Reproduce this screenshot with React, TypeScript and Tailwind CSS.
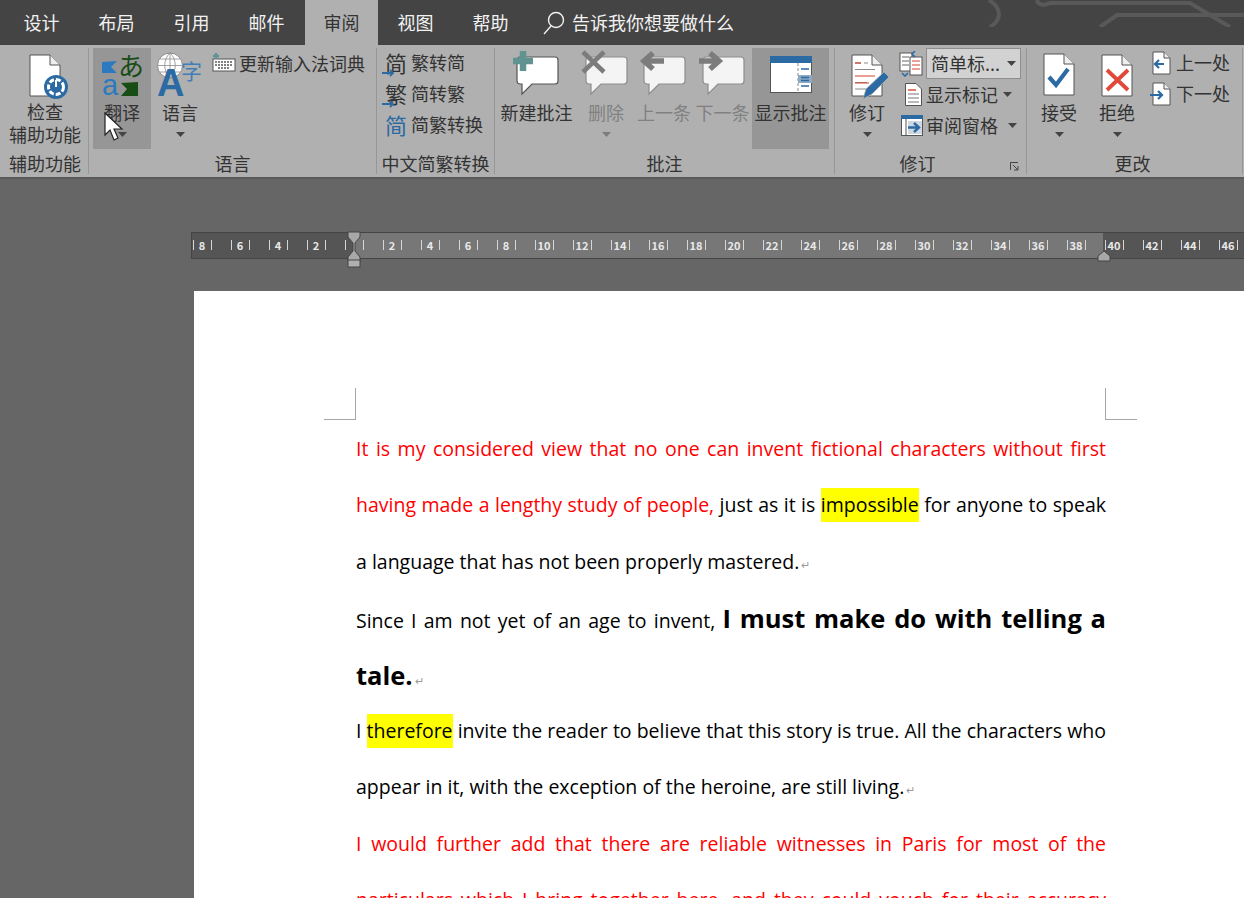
import React from 'react';

const cjk = '"Noto Sans CJK SC", "Noto Sans", sans-serif';

const Caret = ({ color = '#444' }: { color?: string }) => (
  <svg width="9" height="5" viewBox="0 0 9 5" className="shrink-0"><path d="M0 0h9L4.5 5z" fill={color} /></svg>
);

const Doc = ({ w = 30, h = 41, fold = 10, className = '', children }: { w?: number; h?: number; fold?: number; className?: string; children?: React.ReactNode }) => (
  <svg width={w + 2} height={h + 2} viewBox={`0 0 ${w + 2} ${h + 2}`} className={`overflow-visible ${className}`}>
    <path d={`M1 1H${w + 1 - fold}L${w + 1} ${fold + 1}V${h + 1}H1z`} fill="#fff" stroke="#555" />
    <path d={`M${w + 1 - fold} 1V${fold + 1}H${w + 1}`} fill="#eee" stroke="#555" />
    {children}
  </svg>
);

// comment bubble, origin is 3px above the group's icon row
const Bubble = ({ dim, children }: { dim?: boolean; children?: React.ReactNode }) => (
  <svg width="48" height="46" viewBox="0 0 48 46" className="mt-[2px] overflow-visible">
    <path d="M7 7H42a3 3 0 0 1 3 3V31a3 3 0 0 1-3 3H19L9 44V34H7a3 3 0 0 1-3-3V10a3 3 0 0 1 3-3z" fill={dim ? '#f4f4f4' : '#fff'} stroke={dim ? '#8d8d8d' : '#555'} strokeWidth="1.2" />
    {children}
  </svg>
);

const LargeButton = ({ icon, label, w, dim, caret, active }: { icon: React.ReactNode; label: React.ReactNode; w: number; dim?: boolean; caret?: boolean; active?: boolean }) => (
  <div className={`flex h-[101px] shrink-0 flex-col items-center ${active ? 'bg-[#969696]' : ''}`} style={{ width: w }}>
    <div className="flex h-[52px] items-start justify-center">{icon}</div>
    <div className={`text-center text-[18px] leading-[24px] whitespace-nowrap ${dim ? 'text-[#818181]' : 'text-[#333]'}`}>{label}</div>
    {caret && <div className="mt-[8px] flex"><Caret color={dim ? '#7c7c7c' : '#444'} /></div>}
  </div>
);

const Group = ({ label, w, children, extra, labelPad = 0 }: { label: string; w: number; children: React.ReactNode; extra?: React.ReactNode; labelPad?: number }) => (
  <div className="relative flex h-[126px] shrink-0 flex-col border-r border-[#979797]" style={{ width: w }}>
    <div className="flex flex-1">{children}</div>
    <div className="text-center text-[18px] leading-[22px] text-[#333] whitespace-nowrap" style={{ paddingRight: labelPad }}>{label}</div>
    {extra}
  </div>
);

const SmallRow = ({ icon, label, caretClass }: { icon: React.ReactNode; label: string; caretClass?: string }) => (
  <div className="flex h-[31px] items-center gap-[3px] text-[18px] text-[#333] whitespace-nowrap">
    <div className="flex w-[24px] shrink-0 justify-center">{icon}</div>
    <span>{label}</span>
    {caretClass && <span className={caretClass}><Caret /></span>}
  </div>
);

const HanIcon = ({ top, arrow, blue }: { top: string; arrow?: boolean; blue?: boolean }) => (
  <div className={`relative h-[28px] w-[24px] text-center text-[22px] leading-[26px] ${blue ? 'text-[#2b6aa3]' : 'text-[#333]'}`}>
    {top}
    {arrow && (
      <svg width="13" height="8" viewBox="0 0 13 8" className="absolute bottom-0 left-[-2px]">
        <path d="M0 4h11M8 1l3 3-3 3" fill="none" stroke="#2b6aa3" strokeWidth="1.8" />
      </svg>
    )}
  </div>
);

const leftNums = ['8', '6', '4', '2'];
const rightNums = Array.from({ length: 23 }, (_, i) => String((i + 1) * 2));

const RulerCell = ({ n }: { n: string }) => (
  <div className="flex w-[38px] shrink-0 justify-center">
    <div className="my-[7px] flex h-[10px] w-[19px] items-center justify-center border-x border-[#d6d6d6] text-[11px] font-bold leading-none text-[#e8e8e8]">{n}</div>
  </div>
);

const lineCls = 'h-[56.4px] leading-[56.4px] whitespace-nowrap';
const just = `${lineCls} [text-align:justify] [text-align-last:justify]`;
const Mark = () => <span className="ml-[2px] text-[11px] text-[#9a9a9a]">↵</span>;
const Hl = ({ children }: { children: React.ReactNode }) => (
  <span className="inline-block h-[34px] bg-[#ffff00] align-baseline leading-[34px]">{children}</span>
);

export default function App() {
  return (
    <div className="relative flex h-[898px] w-[1244px] flex-col overflow-hidden bg-[#666666]" style={{ fontFamily: cjk }}>
      {/* tabs */}
      <div className="relative flex h-[45px] shrink-0 items-center overflow-hidden bg-[#444444] pl-[4px] text-[18px] text-[#f2f2f2]">
        {['设计', '布局', '引用', '邮件'].map((t) => (
          <div key={t} className="w-[75px] text-center">{t}</div>
        ))}
        <div className="ml-[1px] flex h-full w-[73px] items-center justify-center bg-[#b0b0b0] text-[#333]">审阅</div>
        <div className="w-[75px] text-center">视图</div>
        <div className="w-[75px] text-center">帮助</div>
        <div className="ml-[15px] flex items-center gap-[7px]">
          <svg width="22" height="24" viewBox="0 0 22 24"><circle cx="13" cy="9" r="7.5" fill="none" stroke="#f2f2f2" strokeWidth="1.4" /><path d="M8 15L1 23" stroke="#f2f2f2" strokeWidth="1.4" /></svg>
          <span>告诉我你想要做什么</span>
        </div>
        <svg width="304" height="27" viewBox="0 0 304 27" className="absolute right-0 top-0">
          <g fill="none" stroke="#595959" strokeWidth="4">
            <path d="M49 0C62 8 62 20 50 27" />
            <path d="M97 0C98 5 104 6 110 3H250L290 27" />
            <path d="M160 27L177 15H304" />
          </g>
        </svg>
      </div>

      {/* ribbon */}
      <div className="flex h-[134px] shrink-0 border-b-2 border-[#5a5a5a] bg-[#b0b0b0] pl-[2px] pt-[3px]">
        <Group label="辅助功能" w={87}>
          <div className="flex w-full flex-col items-center">
            <div className="mt-[6px] h-[46px]">
              <Doc>
                <circle cx="27" cy="33" r="12" fill="#2b6aa3" />
                <circle cx="27" cy="33" r="7.5" fill="none" stroke="#fff" strokeWidth="3" strokeDasharray="5 2" />
                <path d="M27 26v7" stroke="#fff" strokeWidth="2" />
              </Doc>
            </div>
            <div className="text-center text-[18px] leading-[23px] text-[#333]">检查<br />辅助功能</div>
          </div>
        </Group>
        <Group label="语言" w={288}>
          <div className="ml-[4px]">
            <LargeButton
              w={58}
              active
              caret
              label="翻译"
              icon={
                <svg width="40" height="42" viewBox="0 0 40 42" className="mt-[6px] overflow-visible">
                  <path d="M0 8L15 7 9 13 15 19H0z" fill="#2b7ac0" />
                  <text x="16" y="22" fontSize="26" fill="#184d16" style={{ fontFamily: cjk }}>あ</text>
                  <text x="0" y="41" fontSize="29" fill="#2b7ac0" style={{ fontFamily: '"Liberation Sans", sans-serif' }}>a</text>
                  <path d="M36 28V42H19L25 35 19 29z" fill="#184d16" />
                </svg>
              }
            />
          </div>
          <LargeButton
            w={58}
            caret
            label="语言"
            icon={
              <svg width="46" height="44" viewBox="0 0 46 44" className="mt-[5px] overflow-visible">
                <circle cx="13" cy="12.5" r="12.5" fill="#fff" stroke="#8a8a8a" strokeWidth="1" />
                <path d="M13 0v25M1 12.5h24M3 6h20M3 19h20M13 0c-7 6-7 19 0 25M13 0c7 6 7 19 0 25" fill="none" stroke="#8a8a8a" strokeWidth="0.8" />
                <text x="0" y="43" fontSize="38" fontWeight="700" fill="#2b6aa3" style={{ fontFamily: '"Liberation Sans", sans-serif' }}>A</text>
                <text x="24" y="26" fontSize="21" fill="#3f7fb5" style={{ fontFamily: cjk }}>字</text>
              </svg>
            }
          />
          <div className="ml-[3px] flex h-[30px] items-center gap-[3px] text-[18px] text-[#333] whitespace-nowrap">
            <svg width="24" height="20" viewBox="0 0 24 20">
              <rect x="1" y="6" width="22" height="12" fill="#fff" stroke="#555" />
              <path d="M3 9h18M3 12h18M6 15h12" stroke="#555" strokeWidth="1.4" strokeDasharray="2 1" />
              <path d="M4 0v6M1 3h6" stroke="#5f9490" strokeWidth="2.4" />
            </svg>
            <span>更新输入法词典</span>
          </div>
        </Group>
        <Group label="中文简繁转换" w={118}>
          <div className="-mt-[1px] flex flex-col pl-[7px]">
            <SmallRow icon={<HanIcon top="简" arrow />} label="繁转简" />
            <SmallRow icon={<HanIcon top="繁" arrow />} label="简转繁" />
            <SmallRow icon={<HanIcon top="简" blue />} label="简繁转换" />
          </div>
        </Group>
        <Group label="批注" w={340}>
          <div className="flex pl-[1px]">
            <LargeButton w={81} label="新建批注" icon={<Bubble><path d="M10 1V21M0 11H20" stroke="#5f9490" strokeWidth="6.5" /></Bubble>} />
            <LargeButton w={58} dim caret label="删除" icon={<Bubble dim><path d="M1 2L22 22M22 2L1 22" stroke="#7c7c7c" strokeWidth="4.5" /></Bubble>} />
            <LargeButton w={58} dim label="上一条" icon={<Bubble dim><path d="M24 11H6M13 3L4 11l9 8" fill="none" stroke="#7c7c7c" strokeWidth="5.5" /></Bubble>} />
            <LargeButton w={59} dim label="下一条" icon={<Bubble dim><path d="M0 11H18M11 3l9 8-9 8" fill="none" stroke="#7c7c7c" strokeWidth="5.5" /></Bubble>} />
            <LargeButton
              w={77}
              active
              label="显示批注"
              icon={
                <svg width="42" height="37" viewBox="0 0 42 37" className="mt-[8px]">
                  <rect x="0.5" y="0.5" width="41" height="36" fill="#fff" stroke="#555" />
                  <rect x="0" y="0" width="42" height="7" fill="#2b6aa3" />
                  <path d="M28 7V37" stroke="#888" strokeDasharray="3 2" />
                  <rect x="28" y="19" width="14" height="8" fill="#8fa9c4" />
                  <path d="M31 13h8M31 21.5h8M31 24.5h8M31 30h8" stroke="#2b6aa3" strokeWidth="1.3" />
                </svg>
              }
            />
          </div>
        </Group>
        <Group
          label="修订"
          w={192}
          labelPad={26}
          extra={
            <svg width="9" height="9" viewBox="0 0 9 9" className="absolute bottom-[3px] right-[7px]">
              <path d="M.5 8V.5H8M3 3l5 5M8 4v4H4" fill="none" stroke="#444" />
            </svg>
          }
        >
          <div className="flex">
            <LargeButton
              w={64}
              caret
              label="修订"
              icon={
                <Doc className="mt-[6px]">
                  <path d="M4 9h6M13 9h4M4 15.5h20M4 28.5h12M4 35h18" stroke="#8a8a8a" strokeWidth="1.2" />
                  <path d="M4 22h20M4 29h14" stroke="#d4452f" strokeWidth="1.2" />
                  <path d="M4 9h6" stroke="#d4452f" strokeWidth="1.2" />
                  <path d="M12 45L15 35 33 18 38 23 21 40z" fill="#2b6aa3" stroke="#b0b0b0" strokeWidth="0.8" />
                </Doc>
              }
            />
            <div className="flex flex-col">
              <div className="flex h-[31px] items-center">
                <div className="flex w-[27px] justify-start">
                  <svg width="24" height="26" viewBox="0 0 24 26">
                    <rect x="1" y="2" width="12" height="18" fill="#fff" stroke="#555" />
                    <rect x="11" y="6" width="12" height="18" fill="#fff" stroke="#555" />
                    <path d="M13 10h8M13 14h8M13 18h8" stroke="#d4452f" />
                    <path d="M3 6h7M3 10h7M3 14h7" stroke="#666" />
                    <path d="M16 0l-3 3 3 3M3 22l3 3 3-3" fill="none" stroke="#2b6aa3" strokeWidth="1.6" />
                  </svg>
                </div>
                <div className="flex h-[31px] w-[95px] items-center justify-between border border-[#8e8e8e] bg-[#d2d2d2] px-[4px] text-[18px] text-[#333]">
                  <span>简单标...</span>
                  <Caret />
                </div>
              </div>
              <SmallRow
                label="显示标记"
                caretClass="ml-[2px]"
                icon={
                  <svg width="17" height="23" viewBox="0 0 17 23" className="ml-[5px]">
                    <path d="M.5.5H11L16.5 6V22.5H.5z" fill="#fff" stroke="#555" />
                    <path d="M3 7h8" stroke="#d4452f" strokeWidth="1.4" />
                    <path d="M3 11h11M3 15h11M3 19h11" stroke="#777" />
                  </svg>
                }
              />
              <SmallRow
                label="审阅窗格"
                caretClass="ml-[7px]"
                icon={
                  <svg width="22" height="21" viewBox="0 0 22 21" className="ml-[1px]">
                    <rect x="0.5" y="0.5" width="21" height="20" fill="#fff" stroke="#555" />
                    <rect x="0" y="0" width="22" height="4" fill="#2b6aa3" />
                    <path d="M5 4v17" stroke="#555" />
                    <rect x="7" y="6" width="14" height="13" fill="#cfd8e0" />
                    <path d="M7 12.5h10M13 8l5 4.5-5 4.5" fill="none" stroke="#2b6aa3" strokeWidth="2.4" />
                  </svg>
                }
              />
            </div>
          </div>
        </Group>
        <Group label="更改" w={216} labelPad={4}>
          <div className="flex pl-[3px]">
            <LargeButton w={58} caret label="接受" icon={<Doc className="mt-[5px]"><path d="M6 24l7 8L25 16" fill="none" stroke="#2b6aa3" strokeWidth="4.2" /></Doc>} />
            <LargeButton w={58} caret label="拒绝" icon={<Doc className="mt-[6px]"><path d="M6 16l21 20M27 16L6 36" fill="none" stroke="#e0483a" strokeWidth="3.8" /></Doc>} />
            <div className="-mt-[1px] flex flex-col pl-[3px]">
              <SmallRow label="上一处" icon={<Doc w={17} h={22} fold={6}><path d="M12 13H3M7 9l-4 4 4 4" fill="none" stroke="#2b6aa3" strokeWidth="2.2" /></Doc>} />
              <SmallRow label="下一处" icon={<Doc w={17} h={22} fold={6}><path d="M-2 13H9M6 9l4 4-4 4" fill="none" stroke="#2b6aa3" strokeWidth="2.2" /></Doc>} />
            </div>
          </div>
        </Group>
      </div>

      {/* ruler */}
      <div className="relative ml-[191px] mt-[53px] flex h-[27px] shrink-0 border-y border-l border-[#444] bg-[#555555]">
        <div className="absolute left-[162px] top-0 h-full w-[749px] bg-[#777777]" />
        <div className="relative -ml-[9px] flex">
          {leftNums.map((n) => <RulerCell key={n} n={n} />)}
          <RulerCell n="" />
          {rightNums.map((n) => <RulerCell key={n} n={n} />)}
        </div>
        <svg width="14" height="37" viewBox="0 0 14 37" className="absolute -top-[2px] left-[155px]">
          <path d="M1 1H13V6L8 12V20L13 26V31H1V26L6 20V12L1 6z" fill="#a8a8a8" stroke="#444" />
          <rect x="1" y="29" width="12" height="7" fill="#b0b0b0" stroke="#444" />
        </svg>
        <svg width="14" height="12" viewBox="0 0 14 12" className="absolute left-[905px] top-[17px]">
          <path d="M1 11V6L7 1 13 6V11z" fill="#a8a8a8" stroke="#444" />
        </svg>
      </div>

      {/* page */}
      <div className="ml-[194px] mt-[32px] flex-1 bg-white pl-[162px] pr-[138px] pt-[97px] text-[19.5px] text-black" style={{ fontFamily: '"Open Sans", "Noto Sans CJK SC", sans-serif' }}>
        <div className="-ml-[32px] -mr-[31px] mb-[1px] flex h-[32px] justify-between">
          <div className="h-full w-[32px] border-b border-r border-[#a6a6a6]" />
          <div className="h-full w-[32px] border-b border-l border-[#a6a6a6]" />
        </div>
        <div className={`${just} text-[#ff0000]`}>It is my considered view that no one can invent fictional characters without first</div>
        <div className={just}><span className="text-[#ff0000]">having made a lengthy study of people,</span> just as it is <Hl>impossible</Hl> for anyone to speak</div>
        <div className={lineCls}>a language that has not been properly mastered.<Mark /></div>
        <div className={just}>Since I am not yet of an age to invent, <span className="text-[25.5px] font-bold">I must make do with telling a</span></div>
        <div className={lineCls}><span className="text-[25.5px] font-bold">tale.</span><Mark /></div>
        <div className={just}>I <Hl>therefore</Hl> invite the reader to believe that this story is true. All the characters who</div>
        <div className={lineCls}>appear in it, with the exception of the heroine, are still living.<Mark /></div>
        <div className={`${just} text-[#ff0000]`}>I would further add that there are reliable witnesses in Paris for most of the</div>
        <div className={`${just} text-[#ff0000]`}>particulars which I bring together here, and they could vouch for their accuracy</div>
      </div>

      {/* mouse cursor */}
      <svg width="20" height="30" viewBox="0 0 20 30" className="absolute left-[104px] top-[112px]">
        <path d="M1 1V23L6 18 10 28 14 26 10 17H18z" fill="#fff" stroke="#222" strokeWidth="1.2" />
      </svg>
    </div>
  );
}
